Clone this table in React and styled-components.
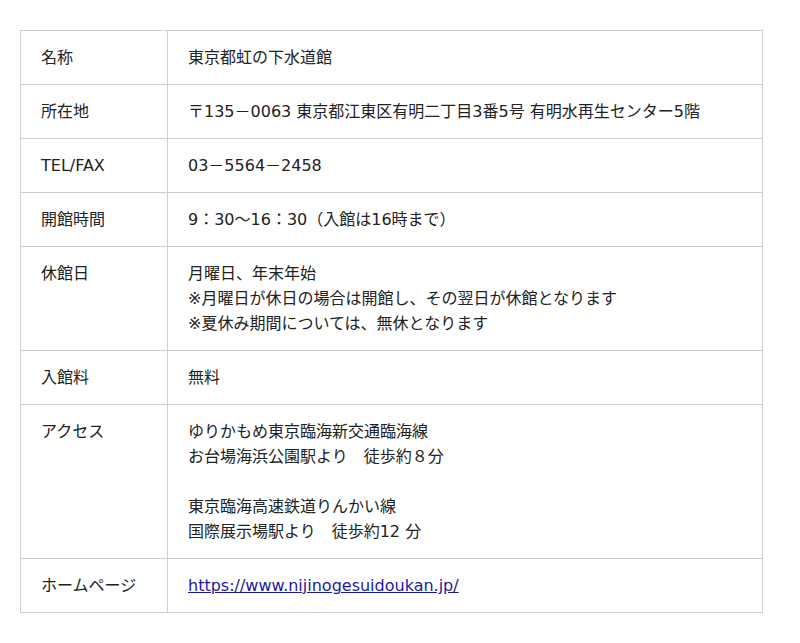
import React from "react";
import styled, { createGlobalStyle } from "styled-components";

const GlobalStyle = createGlobalStyle`
  body {
    margin: 0;
    background: #fff;
    font-family: "DejaVu Sans", "Noto Sans CJK JP", sans-serif;
    color: #222;
  }
`;

const Page = styled.div`
  padding: 30px 20px;
`;

const InfoTable = styled.table`
  width: 743px;
  border-collapse: collapse;
  font-size: 16px;
  line-height: 25px;
`;

const Row = styled.tr``;

const Label = styled.th`
  width: 106px;
  padding: 14px 20px;
  border: 1px solid #cfcfcf;
  text-align: left;
  vertical-align: top;
  font-weight: normal;
`;

const Value = styled.td`
  padding: 14px 20px;
  border: 1px solid #cfcfcf;
  text-align: left;
  vertical-align: top;
`;

const Line = styled.div`
  min-height: 25px;
`;

const Link = styled.a`
  color: #1a1a9e;
  text-decoration: underline;
`;

const rows = [
  { label: "名称", lines: ["東京都虹の下水道館"] },
  {
    label: "所在地",
    lines: ["〒135－0063 東京都江東区有明二丁目3番5号 有明水再生センター5階"],
  },
  { label: "TEL/FAX", lines: ["03－5564－2458"] },
  { label: "開館時間", lines: ["9：30〜16：30（入館は16時まで）"] },
  {
    label: "休館日",
    lines: [
      "月曜日、年末年始",
      "※月曜日が休日の場合は開館し、その翌日が休館となります",
      "※夏休み期間については、無休となります",
    ],
  },
  { label: "入館料", lines: ["無料"] },
  {
    label: "アクセス",
    lines: [
      "ゆりかもめ東京臨海新交通臨海線",
      "お台場海浜公園駅より　徒歩約８分",
      "",
      "東京臨海高速鉄道りんかい線",
      "国際展示場駅より　徒歩約12 分",
    ],
  },
];

export default function App() {
  return (
    <>
      <GlobalStyle />
      <Page>
        <InfoTable>
          <tbody>
            {rows.map((row) => (
              <Row key={row.label}>
                <Label>{row.label}</Label>
                <Value>
                  {row.lines.map((line, i) => (
                    <Line key={i}>{line}</Line>
                  ))}
                </Value>
              </Row>
            ))}
            <Row>
              <Label>ホームページ</Label>
              <Value>
                <Link href="https://www.nijinogesuidoukan.jp/">
                  https://www.nijinogesuidoukan.jp/
                </Link>
              </Value>
            </Row>
          </tbody>
        </InfoTable>
      </Page>
    </>
  );
}
